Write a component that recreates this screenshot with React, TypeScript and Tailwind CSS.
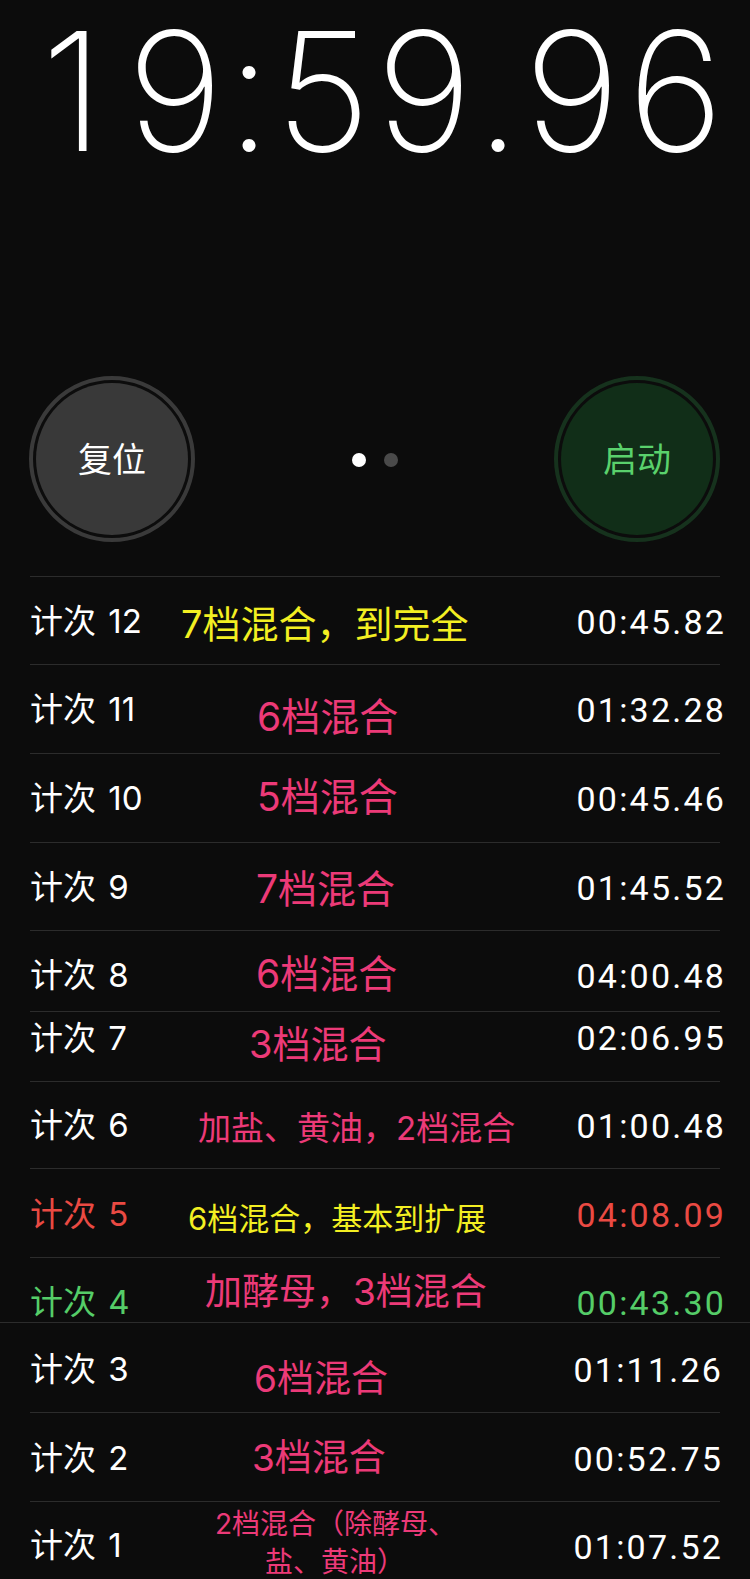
import React from "react";

type Row = {
  label: string;
  num: string;
  ann: string[];
  annColor: string;
  labelColor: string;
  timeColor: string;
  time: string;
  outer: string;
  inner: string;
  labelCls: string;
  annCls: string;
  timeCls: string;
};

const Y = "text-[#f3ef22]";
const P = "text-[#ec3a78]";
const W = "text-white";
const R = "text-[#ea4a43]";
const G = "text-[#55cd68]";

const rows: Row[] = [
  { label: "计次", num: "12", ann: ["7档混合，到完全"], annColor: Y, labelColor: W, timeColor: W, time: "00:45.82", outer: "h-[88px]", inner: "border-t border-[#2c2c2c]", labelCls: "mt-[28px]", annCls: "mt-[28px] ml-[11px] text-[38px] leading-none", timeCls: "mt-[28px] -mr-[6px]" },
  { label: "计次", num: "11", ann: ["6档混合"], annColor: P, labelColor: W, timeColor: W, time: "01:32.28", outer: "h-[89px]", inner: "border-t border-[#2c2c2c]", labelCls: "mt-[28px]", annCls: "mt-[32px] ml-[87px] text-[39px] leading-none", timeCls: "mt-[28px] -mr-[6px]" },
  { label: "计次", num: "10", ann: ["5档混合"], annColor: P, labelColor: W, timeColor: W, time: "00:45.46", outer: "h-[89px]", inner: "border-t border-[#2c2c2c]", labelCls: "mt-[28px]", annCls: "mt-[23px] ml-[87px] text-[39px] leading-none", timeCls: "mt-[28px] -mr-[6px]" },
  { label: "计次", num: "9", ann: ["7档混合"], annColor: P, labelColor: W, timeColor: W, time: "01:45.52", outer: "h-[88px]", inner: "border-t border-[#2c2c2c]", labelCls: "mt-[28px]", annCls: "mt-[26px] ml-[86px] text-[39px] leading-none", timeCls: "mt-[28px] -mr-[6px]" },
  { label: "计次", num: "8", ann: ["6档混合"], annColor: P, labelColor: W, timeColor: W, time: "04:00.48", outer: "h-[81px]", inner: "border-t border-[#2c2c2c]", labelCls: "mt-[28px]", annCls: "mt-[23px] ml-[86px] text-[39px] leading-none", timeCls: "mt-[28px] -mr-[6px]" },
  { label: "计次", num: "7", ann: ["3档混合"], annColor: P, labelColor: W, timeColor: W, time: "02:06.95", outer: "h-[70px]", inner: "border-t border-[#2c2c2c]", labelCls: "mt-[10px]", annCls: "mt-[13px] ml-[79px] text-[38px] leading-none", timeCls: "mt-[9px] -mr-[6px]" },
  { label: "计次", num: "6", ann: ["加盐、黄油，2档混合"], annColor: P, labelColor: W, timeColor: W, time: "01:00.48", outer: "h-[87px]", inner: "border-t border-[#2c2c2c]", labelCls: "mt-[27px]", annCls: "mt-[30px] ml-[28px] text-[33px] leading-none", timeCls: "mt-[27px] -mr-[6px]" },
  { label: "计次", num: "5", ann: ["6档混合，基本到扩展"], annColor: Y, labelColor: R, timeColor: R, time: "04:08.09", outer: "h-[89px]", inner: "border-t border-[#2c2c2c]", labelCls: "mt-[29px]", annCls: "mt-[34px] ml-[18px] text-[31px] leading-none", timeCls: "mt-[29px] -mr-[6px]" },
  { label: "计次", num: "4", ann: ["加酵母，3档混合"], annColor: P, labelColor: G, timeColor: G, time: "00:43.30", outer: "h-[65px]", inner: "border-t border-[#2c2c2c]", labelCls: "mt-[28px]", annCls: "mt-[15px] ml-[35px] text-[37px] leading-none", timeCls: "mt-[28px] -mr-[6px]" },
  { label: "计次", num: "3", ann: ["6档混合"], annColor: P, labelColor: W, timeColor: W, time: "01:11.26", outer: "h-[90px] border-t border-[#2c2c2c]", inner: "pr-[3px]", labelCls: "mt-[30px]", annCls: "mt-[37px] ml-[84px] text-[37px] leading-none", timeCls: "mt-[30px] -mr-[6px]" },
  { label: "计次", num: "2", ann: ["3档混合"], annColor: P, labelColor: W, timeColor: W, time: "00:52.75", outer: "h-[89px]", inner: "border-t border-[#2c2c2c] pr-[3px]", labelCls: "mt-[29px]", annCls: "mt-[26px] ml-[82px] text-[37px] leading-none", timeCls: "mt-[29px] -mr-[6px]" },
  { label: "计次", num: "1", ann: ["2档混合（除酵母、", "盐、黄油）"], annColor: P, labelColor: W, timeColor: W, time: "01:07.52", outer: "h-[82px]", inner: "border-t border-[#2c2c2c] pr-[3px]", labelCls: "mt-[27px]", annCls: "mt-[3px] ml-[45px] w-[240px] text-center text-[28px] leading-[38px]", timeCls: "mt-[28px] -mr-[6px]" },
];

const font = "font-['Inter','Noto_Sans_CJK_SC',sans-serif]";

const slots: { ch: string; w: string }[] = [
  { ch: "1", w: "w-[105px]" },
  { ch: "9", w: "w-[100px]" },
  { ch: ":", w: "w-[48px]" },
  { ch: "5", w: "w-[100px]" },
  { ch: "9", w: "w-[102px]" },
  { ch: ".", w: "w-[46px]" },
  { ch: "9", w: "w-[102px]" },
  { ch: "6", w: "w-[105px]" },
];

export default function App() {
  return (
    <div className={`w-[750px] h-[1579px] overflow-hidden bg-[#0c0c0c] ${font}`}>
      {/* Big time */}
      <div className="h-[376px] pl-[20px] pt-[9px]">
        <div className="flex text-[165px] leading-none font-extralight text-white">
          {slots.map((s, i) => (
            <div key={i} className={`shrink-0 text-center ${s.w}`}>
              {s.ch}
            </div>
          ))}
        </div>
      </div>

      {/* Buttons */}
      <div className="h-[166px] pl-[29px] pr-[30px] flex items-center justify-between">
        <div className="w-[166px] h-[166px] rounded-full border-[4px] border-[#3a3a3a] p-[3px]">
          <div className="w-full h-full rounded-full bg-[#393939] flex items-center justify-center">
            <span className="text-[34px] leading-normal text-white">复位</span>
          </div>
        </div>
        <div className="flex items-center gap-[18px] mt-[2px]">
          <div className="w-[14px] h-[14px] rounded-full bg-white" />
          <div className="w-[14px] h-[14px] rounded-full bg-[#4a4a4a]" />
        </div>
        <div className="w-[166px] h-[166px] rounded-full border-[4px] border-[#16321d] p-[3px]">
          <div className="w-full h-full rounded-full bg-[#112e18] flex items-center justify-center">
            <span className="text-[34px] leading-normal text-[#5ad16c]">启动</span>
          </div>
        </div>
      </div>

      {/* Laps */}
      <div className="mt-[34px]">
        {rows.map((r) => (
          <div key={r.num} className={r.outer}>
            <div className={`mx-[30px] h-full flex items-start ${r.inner}`}>
              <div className={`w-[140px] shrink-0 text-[33px] leading-none whitespace-nowrap ${r.labelColor} ${r.labelCls}`}>
                {r.label} <span className="ml-[3px]">{r.num}</span>
              </div>
              <div className={`whitespace-nowrap ${r.annColor} ${r.annCls}`}>
                {r.ann.map((l) => (
                  <div key={l}>{l}</div>
                ))}
              </div>
              <div className={`ml-auto font-['Roboto',sans-serif] text-[34px] leading-none tracking-[2.2px] ${r.timeColor} ${r.timeCls}`}>
                {r.time}
              </div>
            </div>
          </div>
        ))}
      </div>
    </div>
  );
}
